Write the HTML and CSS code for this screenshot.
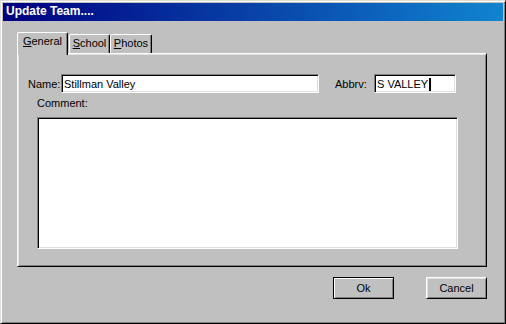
FILE: index.html
```html
<!DOCTYPE html>
<html>
<head>
<meta charset="utf-8">
<title>Update Team</title>
<link rel="stylesheet" href="styles.css">
</head>
<body>
<div class="window">
  <div class="titlebar">Update Team....</div>
  <div class="dialog-body">
    <div class="tabs">
      <div class="tab tab-active"><u>G</u>eneral</div>
      <div class="tab tab-school"><u>S</u>chool</div>
      <div class="tab tab-photos"><u>P</u>hotos</div>
    </div>
    <div class="panel">
      <div class="row">
        <span class="label label-name">Name:</span>
        <div class="field field-name">Stillman Valley</div>
        <span class="label label-abbrv">Abbrv:</span>
        <div class="field field-abbrv">S VALLEY<span class="caret"></span></div>
      </div>
      <div class="comment-label">Comment:</div>
      <div class="field textarea"></div>
    </div>
    <div class="buttons">
      <div class="btn btn-default">Ok</div>
      <div class="btn">Cancel</div>
    </div>
  </div>
</div>
</body>
</html>
```

FILE: styles.css
```css
html, body {
  margin: 0;
  padding: 0;
  background: #c0c0c0;
}
body {
  font-family: "Liberation Sans", Arial, sans-serif;
  font-size: 11px;
  line-height: 13px;
  color: #000;
}
.window {
  box-sizing: border-box;
  width: 506px;
  height: 324px;
  background: #c0c0c0;
  border: 1px solid;
  border-color: #dfdfdf #000 #000 #dfdfdf;
  box-shadow: inset 1px 1px #fff, inset -1px -1px #808080;
  padding: 2px;
  display: flex;
  flex-direction: column;
}
.titlebar {
  height: 18px;
  flex: none;
  background: linear-gradient(to right, #000080, #1084d0);
  color: #fff;
  font-weight: bold;
  font-size: 12px;
  line-height: 16px;
  padding-left: 3px;
  white-space: nowrap;
}
.dialog-body {
  padding: 11px 0 0 14px;
}
.tabs {
  display: flex;
  align-items: flex-end;
  height: 21px;
}
.tab {
  box-sizing: border-box;
  height: 19px;
  border: 1px solid;
  border-bottom: none;
  border-color: #fff #000 transparent #fff;
  box-shadow: inset -1px 0 #808080;
  border-radius: 2px 2px 0 0;
  padding-top: 2px;
  text-align: center;
  background: #c0c0c0;
  white-space: nowrap;
}
.tab-active {
  width: 51px;
  height: 23px;
  margin-bottom: -2px;
  position: relative;
  z-index: 1;
}
.tab-school {
  width: 41px;
  margin-left: 1px;
}
.tab-photos {
  width: 42px;
}
.panel {
  box-sizing: border-box;
  width: 470px;
  height: 214px;
  border: 1px solid;
  border-color: #fff #000 #000 #fff;
  box-shadow: inset 1px 1px #dfdfdf, inset -1px -1px #808080;
  padding: 20px 0 0 10px;
}
.row {
  display: flex;
  align-items: baseline;
}
.label-name {
  width: 33px;
}
.label-abbrv {
  width: 39px;
  margin-left: 16px;
}
.field {
  box-sizing: border-box;
  background: #fff;
  border: 1px solid;
  border-color: #808080 #fff #fff #808080;
  box-shadow: inset 1px 1px #000, inset -1px -1px #dfdfdf;
  padding: 3px 2px 0 2px;
  white-space: nowrap;
}
.field-name {
  width: 258px;
  height: 19px;
}
.field-abbrv {
  width: 82px;
  height: 19px;
}
.caret {
  display: inline-block;
  width: 2px;
  height: 13px;
  margin-left: 1px;
  background: #000;
  vertical-align: top;
}
.comment-label {
  margin: 4px 0 0 9px;
}
.textarea {
  width: 421px;
  height: 132px;
  margin: 7px 0 0 9px;
}
.buttons {
  display: flex;
  justify-content: flex-end;
  gap: 32px;
  width: 470px;
  margin-top: 10px;
}
.btn {
  box-sizing: border-box;
  width: 61px;
  height: 22px;
  display: flex;
  align-items: center;
  justify-content: center;
  border: 1px solid;
  border-color: #fff #000 #000 #fff;
  box-shadow: inset 1px 1px #dfdfdf, inset -1px -1px #808080;
}
.btn-default {
  border-color: #000;
  box-shadow: inset 1px 1px #fff, inset -1px -1px #808080;
}
```
